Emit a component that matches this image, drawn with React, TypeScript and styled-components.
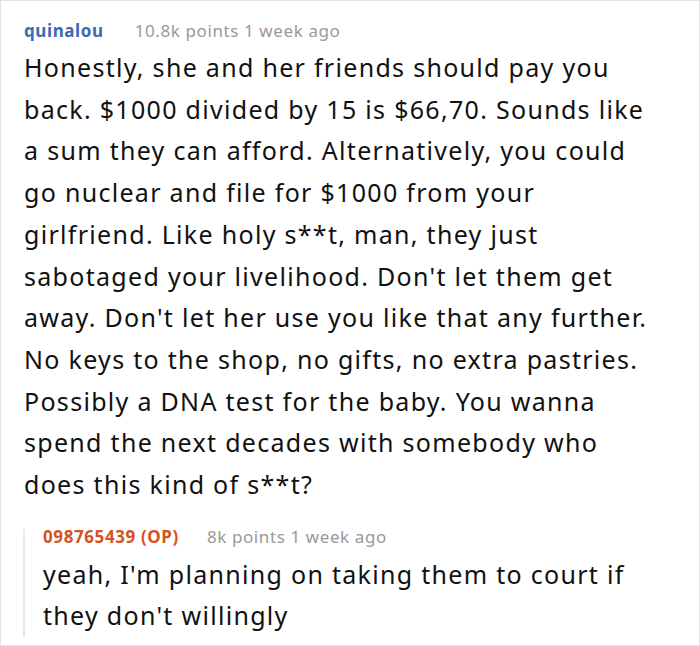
import styled, { createGlobalStyle } from "styled-components";

const GlobalStyle = createGlobalStyle`
    html, body {
        margin: 0;
        padding: 0;
        background: #ffffff;
    }
    body {
        font-family: "Noto Sans", "Open Sans", sans-serif;
    }
`;

const Frame = styled.div`
    box-sizing: border-box;
    width: 700px;
    height: 646px;
    border: 1px solid #e2e2e2;
    padding: 14px 4px 0 23px;
    overflow: hidden;
`;

const Comment = styled.div`
    display: flex;
    flex-direction: column;
`;

const Header = styled.div<{ $gap?: number }>`
    display: flex;
    align-items: baseline;
    gap: ${(p) => p.$gap ?? 31}px;
    font-size: 17px;
    letter-spacing: 0.6px;
    line-height: 32px;
`;

const Author = styled.span<{ $op?: boolean }>`
    font-weight: 700;
    color: ${(p) => (p.$op ? "#d4531f" : "#3a6ab2")};
`;

const Meta = styled.span`
    color: #999999;
`;

const Body = styled.p`
    margin: 0;
    font-size: 25px;
    letter-spacing: 1.3px;
    line-height: 41.7px;
    color: #111111;
    white-space: nowrap;
`;

const Reply = styled.div`
    position: relative;
    margin: 15px 0 0 -1px;
    padding-left: 20px;

    &::before {
        content: "";
        position: absolute;
        left: 0;
        top: 8px;
        bottom: 0;
        width: 2px;
        background: #e8e8e8;
    }

    ${Body} {
        margin-top: 1px;
    }
`;

const lines = [
    "Honestly, she and her friends should pay you",
    "back. $1000 divided by 15 is $66,70. Sounds like",
    "a sum they can afford. Alternatively, you could",
    "go nuclear and file for $1000 from your",
    "girlfriend. Like holy s**t, man, they just",
    "sabotaged your livelihood. Don't let them get",
    "away. Don't let her use you like that any further.",
    "No keys to the shop, no gifts, no extra pastries.",
    "Possibly a DNA test for the baby. You wanna",
    "spend the next decades with somebody who",
    "does this kind of s**t?",
];

const replyLines = [
    "yeah, I'm planning on taking them to court if",
    "they don't willingly",
];

function Text({ rows }: { rows: string[] }) {
    return (
        <Body>
            {rows.map((row, i) => (
                <span key={i}>
                    {row}
                    {i < rows.length - 1 && <br />}
                </span>
            ))}
        </Body>
    );
}

export default function App() {
    return (
        <>
            <GlobalStyle />
            <Frame>
                <Comment>
                    <Header>
                        <Author>quinalou</Author>
                        <Meta>10.8k points 1 week ago</Meta>
                    </Header>
                    <Text rows={lines} />
                    <Reply>
                        <Header $gap={28}>
                            <Author $op>098765439 (OP)</Author>
                            <Meta>8k points 1 week ago</Meta>
                        </Header>
                        <Text rows={replyLines} />
                    </Reply>
                </Comment>
            </Frame>
        </>
    );
}
